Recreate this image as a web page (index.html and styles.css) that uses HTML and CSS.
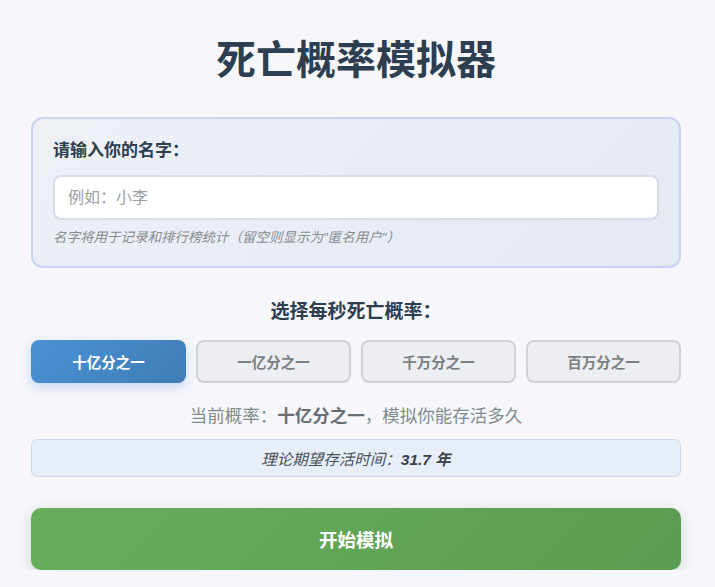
FILE: index.html
```
<!DOCTYPE html>
<html lang="zh">
<head>
<meta charset="utf-8">
<link rel="stylesheet" href="styles.css">
</head>
<body>
<div class="page">
  <h1 class="title">死亡概率模拟器</h1>
  <div class="name-box">
    <label class="name-label">请输入你的名字：</label>
    <input class="name-input" type="text" placeholder="例如：小李">
    <p class="hint">名字将用于记录和排行榜统计（留空则显示为"匿名用户"）</p>
  </div>
  <h3 class="choose">选择每秒死亡概率：</h3>
  <div class="options">
    <button class="opt active">十亿分之一</button>
    <button class="opt">一亿分之一</button>
    <button class="opt">千万分之一</button>
    <button class="opt">百万分之一</button>
  </div>
  <p class="current">当前概率：<strong>十亿分之一</strong>，模拟你能存活多久</p>
  <div class="expect">理论期望存活时间：<strong>31.7 年</strong></div>
  <button class="start">开始模拟</button>
</div>
</body>
</html>
```
FILE: styles.css
```
* { box-sizing: border-box; }
html, body { margin: 0; padding: 0; }
body {
  background: #f7f7fb;
  font-family: "Liberation Sans", "Noto Sans CJK SC", sans-serif;
  color: #2c3e50;
}
.page {
  width: 650px;
  margin: 0 0 0 31px;
  padding-top: 33px;
  display: flex;
  flex-direction: column;
}
.title {
  margin: 0;
  text-align: center;
  font-size: 40px;
  line-height: 54px;
  font-weight: 700;
  color: #2c3e50;
}
.name-box {
  margin-top: 30px;
  border: 2px solid #c8d3f0;
  border-radius: 12px;
  background: linear-gradient(135deg, #eef0f6, #e4e9f3);
  padding: 20px 20px 18px 20px;
  display: flex;
  flex-direction: column;
}
.name-label {
  font-size: 17px;
  font-weight: 700;
  color: #2c3e50;
  line-height: 24px;
}
.name-input {
  margin-top: 12px;
  height: 45px;
  border: 2px solid #d6dce8;
  border-radius: 8px;
  background: #fff;
  padding: 0 13px;
  font-size: 16px;
  font-family: inherit;
  outline: none;
}
.name-input::placeholder { color: #98a0a6; }
.hint {
  margin: 8px 0 0 0;
  font-size: 13.5px;
  line-height: 20px;
  font-style: italic;
  color: #868b8f;
}
.choose {
  margin: 30px 0 0 0;
  text-align: center;
  font-size: 19px;
  line-height: 28px;
  font-weight: 700;
  color: #2c3e50;
}
.options {
  margin-top: 14px;
  display: grid;
  grid-template-columns: repeat(4, 1fr);
  gap: 10px;
}
.opt {
  height: 43px;
  border: 2px solid #cfd2d6;
  border-radius: 8px;
  background: #eceef1;
  color: #7a7f83;
  font-size: 14.5px;
  font-weight: 700;
  font-family: inherit;
}
.opt.active {
  border: none;
  background: linear-gradient(135deg, #4a92d6, #3f7cb4);
  color: #fff;
  box-shadow: 0 4px 12px rgba(74, 144, 217, 0.3);
}
.current {
  margin: 20px 0 0 0;
  text-align: center;
  font-size: 17.5px;
  line-height: 26px;
  color: #7f8c8d;
}
.current strong { color: #666e73; }
.expect {
  margin-top: 10px;
  height: 38px;
  border: 1px solid #cad9ee;
  border-radius: 6px;
  background: #e8eef8;
  display: flex;
  align-items: center;
  justify-content: center;
  font-size: 15.5px;
  font-style: italic;
  color: #4a5158;
}
.expect strong { color: #3a4148; }
.start {
  margin-top: 31px;
  height: 62px;
  border: none;
  border-radius: 10px;
  background: linear-gradient(135deg, #68ad5d, #5b9d50);
  color: #fff;
  font-size: 18.5px;
  font-weight: 700;
  font-family: inherit;
  box-shadow: 0 4px 14px rgba(80, 130, 80, 0.25);
}
```
